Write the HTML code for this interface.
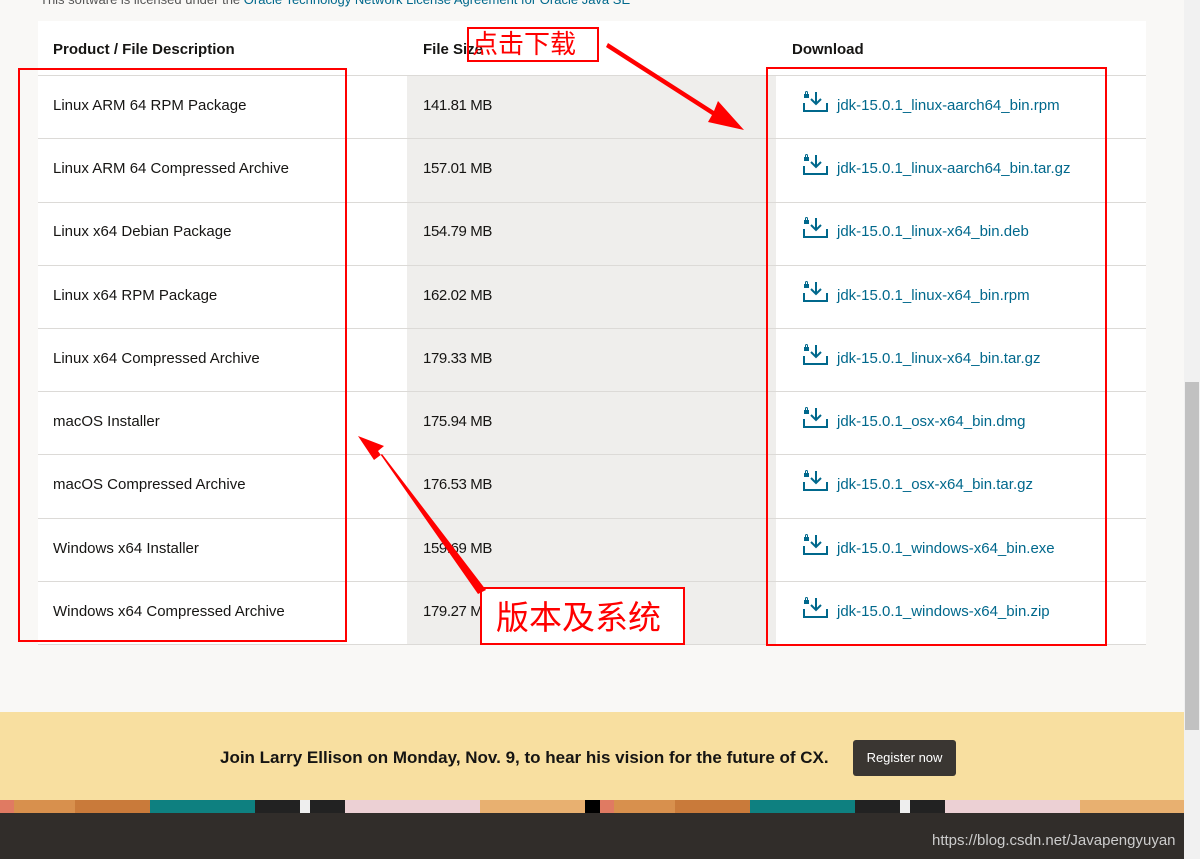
<!DOCTYPE html>
<html><head><meta charset="utf-8"><style>
*{margin:0;padding:0;box-sizing:border-box}
body{width:1200px;height:859px;overflow:hidden;background:#f9f8f6;position:relative;font-family:"Liberation Sans","Noto Sans CJK SC",sans-serif;color:#161513}
.abs{position:absolute}
.tbl{left:38px;top:21px;width:1108px;height:624px;background:#fff}
.sizecol{left:407px;top:76px;width:369px;height:569px;background:#efeeec}
.hline{left:38px;width:1108px;height:1px;background:#dcdad7}
.t{position:absolute;font-size:15px;white-space:nowrap}
.h{font-weight:bold;font-size:15px}
.lnk{color:#00688c}
.red{position:absolute;border:2px solid #f00}
.cn{position:absolute;color:#f00;font-family:"Noto Sans CJK SC",sans-serif;white-space:nowrap}
</style></head><body>
<div class="abs" style="left:40px;top:-8px;font-size:13px;color:#555">This software is licensed under the <span class="lnk">Oracle Technology Network License Agreement for Oracle Java SE</span></div>
<div class="abs tbl"></div>
<div class="abs sizecol"></div>
<div class="abs hline" style="top:75px"></div>
<div class="abs hline" style="top:138px"></div>
<div class="abs hline" style="top:202px"></div>
<div class="abs hline" style="top:265px"></div>
<div class="abs hline" style="top:328px"></div>
<div class="abs hline" style="top:391px"></div>
<div class="abs hline" style="top:454px"></div>
<div class="abs hline" style="top:518px"></div>
<div class="abs hline" style="top:581px"></div>
<div class="abs hline" style="top:644px"></div>
<div class="t h" style="left:53px;top:41px">Product / File Description</div>
<div class="t h" style="left:423px;top:41px">File Size</div>
<div class="t h" style="left:792px;top:41px">Download</div>
<div id="rows"></div>
<div class="abs" style="left:1184px;top:0;width:16px;height:859px;background:#f1f1f1"></div>
<div class="abs" style="left:1185px;top:382px;width:14px;height:348px;background:#c1c1c1"></div>
<div class="abs" style="left:0;top:712px;width:1184px;height:88px;background:#f8dfa0"></div>
<div class="t" style="left:220px;top:748px;font-weight:bold;font-size:17px">Join Larry Ellison on Monday, Nov. 9, to hear his vision for the future of CX.</div>
<div class="abs" style="left:853px;top:740px;width:103px;height:36px;background:#3a3632;border-radius:3px;color:#fff;font-size:13px;text-align:center;line-height:36px">Register now</div>
<div class="abs" style="left:0;top:800px;width:1184px;height:13px;background:linear-gradient(90deg,#e07a62 0 14px,#d8904d 14px 75px,#c97a3a 75px 150px,#0e8080 150px 255px,#222 255px 300px,#eee 300px 310px,#222 310px 345px,#ecd0d4 345px 480px,#e8b070 480px 585px,#000 585px 600px,#e07a62 600px 614px,#d8904d 614px 675px,#c97a3a 675px 750px,#0e8080 750px 855px,#222 855px 900px,#eee 900px 910px,#222 910px 945px,#ecd0d4 945px 1080px,#e8b070 1080px 1184px)"></div>
<div class="abs" style="left:0;top:813px;width:1184px;height:46px;background:#312d2a"></div>
<div class="t" style="left:932px;top:832px;color:#ccc;font-size:15px">https://blog.csdn.net/Javapengyuyan</div>
<div class="red" style="left:18px;top:68px;width:329px;height:574px"></div>
<div class="red" style="left:766px;top:67px;width:341px;height:579px"></div>
<div class="red" style="left:467px;top:27px;width:132px;height:35px"></div>
<div class="cn" style="left:472px;top:26px;font-size:26px;line-height:34px">点击下载</div>
<div class="red" style="left:480px;top:587px;width:205px;height:58px;background:#fff"></div>
<div class="cn" style="left:496px;top:592px;font-size:33px;line-height:46px">版本及系统</div>
<svg class="abs" style="left:0;top:0" width="1200" height="859">
<polygon points="608,43 714,111 718,101 744,130 708,122 712,115 606,47" fill="#f00"/>
<polygon points="486,590 382,454 374,460 358,436 384,446 378,451 478,594" fill="#f00"/>
</svg>
<script>
var d=[["Linux ARM 64 RPM Package","141.81 MB","jdk-15.0.1_linux-aarch64_bin.rpm"],["Linux ARM 64 Compressed Archive","157.01 MB","jdk-15.0.1_linux-aarch64_bin.tar.gz"],["Linux x64 Debian Package","154.79 MB","jdk-15.0.1_linux-x64_bin.deb"],["Linux x64 RPM Package","162.02 MB","jdk-15.0.1_linux-x64_bin.rpm"],["Linux x64 Compressed Archive","179.33 MB","jdk-15.0.1_linux-x64_bin.tar.gz"],["macOS Installer","175.94 MB","jdk-15.0.1_osx-x64_bin.dmg"],["macOS Compressed Archive","176.53 MB","jdk-15.0.1_osx-x64_bin.tar.gz"],["Windows x64 Installer","159.69 MB","jdk-15.0.1_windows-x64_bin.exe"],["Windows x64 Compressed Archive","179.27 MB","jdk-15.0.1_windows-x64_bin.zip"]];
var tops=[97,160,223,287,350,413,476,540,603],h="";
d.forEach(function(r,i){var y=tops[i];
h+='<div class="t" style="left:53px;top:'+y+'px">'+r[0]+'</div><div class="t" style="left:423px;top:'+y+'px;letter-spacing:-0.4px">'+r[1]+'</div><div class="t lnk" style="left:837px;top:'+y+'px">'+r[2]+'</div>'+
'<svg class="abs" style="left:803px;top:'+(y-7)+'px" width="26" height="26" viewBox="0 0 26 26" fill="none" stroke="#00688c" stroke-width="2"><rect x="1" y="4" width="5" height="4" fill="#00688c" stroke="none"/><path d="M2.5 4V2.5a1 1 0 0 1 2 0V4" stroke-width="1"/><path d="M1 13v8h23v-8M13 2v12M8 9l5 5 5-5"/></svg>';});
document.getElementById("rows").innerHTML=h;
</script>
</body></html>
